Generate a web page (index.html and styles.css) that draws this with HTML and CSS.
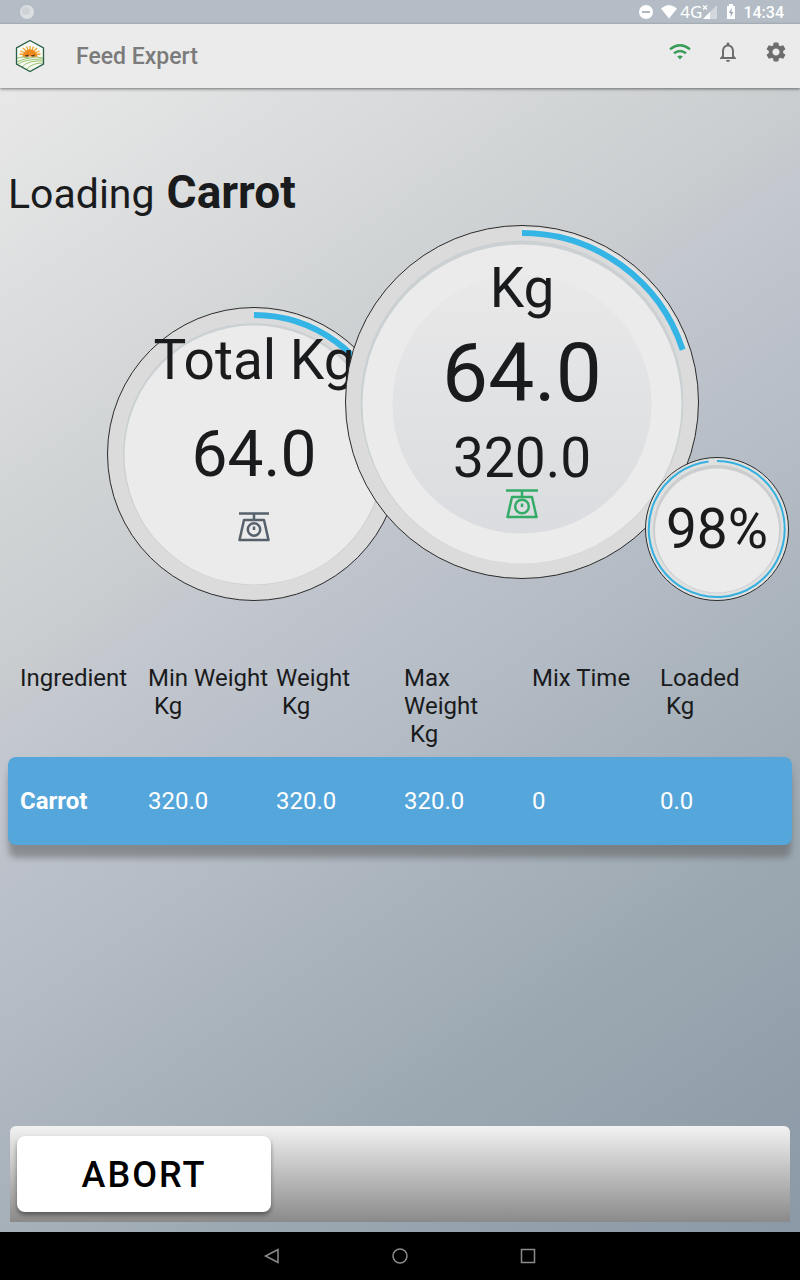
FILE: index.html
```html
<!DOCTYPE html>
<html lang="en">
<head>
<meta charset="utf-8">
<meta name="viewport" content="width=device-width, initial-scale=1">
<title>Feed Expert</title>
<link rel="stylesheet" href="styles.css">
</head>
<body>
<div class="status-bar">
  <svg class="status-dot" width="16" height="16" viewBox="0 0 16 16"><circle cx="8" cy="8" r="7" fill="#dcdfe1"/><circle cx="7" cy="7" r="4" fill="#ced3d6"/></svg>
  <div class="status-icons">
    <svg width="16" height="16" viewBox="0 0 16 16"><circle cx="8" cy="8" r="7" fill="#fff"/><rect x="4" y="7" width="8" height="2" fill="#b0b8bf"/></svg>
    <svg class="status-wifi" width="18" height="16" viewBox="0 0 18 16"><path d="M1 4.500Q9-2.500 17 4.500L9 14.500Z" fill="#fff"/></svg>
    <span class="network">4G</span>
    <svg class="status-signal" width="16" height="16" viewBox="0 0 16 16"><path d="M15 1v14H1Z" fill="#d3d8dc"/><path d="M8 8v7H1Z" fill="#fff"/><path d="M1 1.500l4 4M5 1.500l-4 4" stroke="#fff" stroke-width="1.200"/></svg>
    <svg class="status-battery" width="10" height="16" viewBox="0 0 10 16"><path d="M3 0h4v2h2v13H1V2h2Z" fill="#fff"/><path d="M5.500 4L3 9h1.700v4L7.200 8H5.500Z" fill="#9aa5ae"/></svg>
    <span class="clock">14:34</span>
  </div>
</div>

<header class="app-bar">
  <svg class="logo" width="30" height="34" viewBox="0 0 30 34">
    <path d="M15 1.500L28.500 9v16L15 32.500L1.500 25V9Z" fill="#f8faf5"/>
    <g stroke="#f0a028" stroke-width="1.300"><path d="M15 16V7M15 16L11.500 7.500M15 16L18.500 7.500M15 16L8 9M15 16L22 9M15 16L5.500 12M15 16L24.500 12M15 16L4.500 15M15 16L25.500 15"/></g>
    <path d="M7.500 18a7.500 7.500 0 0 1 15 0Z" fill="#ee8a1d"/>
    <path d="M10 16.500l3-1 1 2-3 .500ZM16 16.500l4-1-1 2-2 .500Z" fill="#59351a"/>
    <path d="M2 19Q15 16 28 19V25L15 32L2 25Z" fill="#f4f8ee"/>
    <g fill="none" stroke="#9bc272" stroke-width="1"><path d="M2 19Q8 17 14 19Q8 20 2 23M14 19Q22 17 28 19M3 25Q10 20 28 20M7 28Q13 21 28 22M12 30Q17 24 28 24"/></g>
    <path d="M15 1.500L28.500 9v16L15 32.500L1.500 25V9Z" fill="none" stroke="#285f46" stroke-width="1.300"/>
  </svg>
  <h1 class="app-title">Feed Expert</h1>
  <nav class="app-actions">
    <button class="icon-button" type="button" aria-label="Connection"><svg width="24" height="24" viewBox="0 0 24 24" fill="none" stroke="#3b9b58" stroke-width="2.500"><path d="M2 9.300Q12 1.300 22 9.300M6 13.300Q12 8.700 18 13.300"/><path d="M9.200 16.500Q12 14.400 14.800 16.500L12 19.500Z" fill="#3b9b58" stroke="none"/></svg></button>
    <button class="icon-button" type="button" aria-label="Notifications"><svg width="24" height="24" viewBox="0 0 24 24" fill="#6d6d6d"><path d="M12 22c1.100 0 2-.900 2-2h-4c0 1.100.900 2 2 2zm6-6v-5c0-3.070-1.630-5.640-4.500-6.320V4c0-.830-.670-1.500-1.500-1.500s-1.500.670-1.500 1.500v.680C7.640 5.360 6 7.920 6 11v5l-2 2v1h16v-1l-2-2zm-2 1H8v-6c0-2.480 1.510-4.500 4-4.500s4 2.020 4 4.500v6z"/></svg></button>
    <button class="icon-button" type="button" aria-label="Settings"><svg width="24" height="24" viewBox="0 0 24 24" fill="#6d6d6d"><path d="M19.140 12.940c.040-.300.060-.610.060-.940 0-.320-.020-.640-.070-.940l2.030-1.580c.180-.140.230-.410.120-.610l-1.920-3.320c-.120-.220-.370-.290-.590-.220l-2.390.960c-.500-.380-1.030-.700-1.620-.940l-.360-2.540c-.040-.240-.240-.410-.480-.410h-3.840c-.240 0-.430.170-.470.410l-.360 2.540c-.590.240-1.130.570-1.620.940l-2.390-.960c-.220-.080-.470 0-.590.220L2.740 8.870c-.120.210-.080.470.120.610l2.030 1.580c-.050.300-.090.630-.090.940s.020.640.070.940l-2.030 1.580c-.180.140-.230.410-.120.610l1.920 3.320c.120.220.370.290.590.220l2.390-.960c.500.380 1.030.700 1.620.940l.360 2.540c.050.240.240.410.480.410h3.840c.240 0 .440-.170.470-.410l.360-2.540c.590-.240 1.130-.560 1.620-.940l2.390.960c.220.080.470 0 .590-.220l1.920-3.320c.120-.220.070-.470-.120-.610l-2.010-1.580zM12 15.600c-1.980 0-3.600-1.620-3.600-3.600s1.620-3.600 3.600-3.600 3.600 1.620 3.600 3.600-1.620 3.600-3.600 3.600z"/></svg></button>
  </nav>
</header>

<main class="content">
  <h2 class="heading">Loading <strong>Carrot</strong></h2>

  <section class="gauges">
    <div class="gauge gauge-total">
      <svg class="dial" viewBox="0 0 294 294">
        <circle cx="147" cy="147" r="146.500" fill="#dbdbdb" stroke="#2b2b2b"/>
        <path d="M147 5A142 142 0 0 1 282 103" fill="none" stroke="#e6e4e2" stroke-width="5"/>
        <circle cx="147" cy="147" r="131" fill="#cbd0d3"/>
        <circle cx="147" cy="148" r="129.500" fill="#ebebeb"/>
        <path d="M147 8A139 139 0 0 1 279.200 104" fill="none" stroke="#35b4e6" stroke-width="6"/>
      </svg>
      <div class="readout">
        <span class="unit">Total Kg</span>
        <span class="total-value">64.0</span>
        <svg class="scale-icon scale-grey" width="32" height="32" viewBox="0 0 32 32"><path d="M1 2.500H31M16 2.500V9M6 9H26L30.500 29H1.500Z"/><circle cx="16" cy="18.500" r="6.200"/><path d="M16 15.500V19"/></svg>
      </div>
    </div>
    <div class="gauge gauge-main">
      <svg class="dial" viewBox="0 0 354 354">
        <defs><linearGradient id="disc" x1="0" y1="0" x2="0" y2="1"><stop offset="0" stop-color="#e9e9e9"/><stop offset="0.500" stop-color="#e1e2e4"/><stop offset="1" stop-color="#dadcdf"/></linearGradient></defs>
        <circle cx="177" cy="177" r="176.500" fill="#dbdbdb" stroke="#2b2b2b"/>
        <path d="M177 5A172 172 0 0 1 340.600 124" fill="none" stroke="#e6e4e2" stroke-width="5"/>
        <circle cx="177" cy="177" r="161.500" fill="#cbd0d3"/>
        <circle cx="177" cy="179" r="159.500" fill="#ebebeb"/>
        <circle cx="177" cy="179" r="129.500" fill="url(#disc)"/>
        <path d="M177 8A169 169 0 0 1 337.700 124.800" fill="none" stroke="#35b4e6" stroke-width="6"/>
      </svg>
      <div class="readout">
        <span class="unit">Kg</span>
        <span class="main-value">64.0</span>
        <span class="target-value">320.0</span>
        <svg class="scale-icon scale-green" width="32" height="32" viewBox="0 0 32 32"><path d="M0 2.500H32M16 2.500V9M6 9H26L30.500 29H1.500Z"/><circle cx="16" cy="18.500" r="6.800"/><path d="M16 15.500V19"/></svg>
      </div>
    </div>
    <div class="gauge gauge-percent">
      <svg class="dial" viewBox="0 0 144 144">
        <circle cx="72" cy="72" r="71.500" fill="#dfe0e0" stroke="#2b2b2b"/>
        <circle cx="72" cy="72" r="64" fill="#cbcdcf"/>
        <circle cx="72" cy="73.500" r="62" fill="#ebebeb"/>
        <path d="M72 4A68 68 0 1 1 63.500 4.500" fill="none" stroke="#35b0df" stroke-width="2"/>
      </svg>
      <div class="readout"><span class="percent-value">98%</span></div>
    </div>
  </section>

  <table class="ingredients">
    <thead>
      <tr>
        <th scope="col">Ingredient</th>
        <th scope="col">Min Weight<br>&nbsp;Kg</th>
        <th scope="col">Weight<br>&nbsp;Kg</th>
        <th scope="col">Max Weight<br>&nbsp;Kg</th>
        <th scope="col">Mix Time</th>
        <th scope="col">Loaded<br>&nbsp;Kg</th>
      </tr>
    </thead>
    <tbody>
      <tr>
        <td><strong>Carrot</strong></td>
        <td>320.0</td>
        <td>320.0</td>
        <td>320.0</td>
        <td>0</td>
        <td>0.0</td>
      </tr>
    </tbody>
  </table>

  <div class="action-bar">
    <button class="abort" type="button">ABORT</button>
  </div>
</main>

<nav class="system-nav">
  <button class="system-button" type="button" aria-label="Back"><svg width="20" height="20" viewBox="0 0 20 20"><path d="M16 3.500V16.500L3.500 10Z"/></svg></button>
  <button class="system-button" type="button" aria-label="Home"><svg width="20" height="20" viewBox="0 0 20 20"><circle cx="10" cy="10" r="7"/></svg></button>
  <button class="system-button" type="button" aria-label="Recent apps"><svg width="20" height="20" viewBox="0 0 20 20"><rect x="3.500" y="3.500" width="13" height="13"/></svg></button>
</nav>
</body>
</html>
```
FILE: styles.css
```css
* {
  box-sizing: border-box;
}

body {
  margin: 0;
  min-height: 100vh;
  display: flex;
  flex-direction: column;
  font-family: Roboto, "Liberation Sans", sans-serif;
  color: #1a1b1d;
}

svg {
  display: block;
}

button {
  font: inherit;
  border: 0;
  padding: 0;
  background: none;
  cursor: pointer;
}

/* System status bar */
.status-bar {
  display: flex;
  align-items: center;
  justify-content: space-between;
  height: 24px;
  padding: 0 16px 0 19px;
  background: #b4bdc5;
  color: #fff;
}

.status-icons {
  display: flex;
  align-items: center;
}

.status-wifi {
  margin-left: 6px;
}

.network {
  margin-left: 2px;
  font: 17px/24px "Noto Sans", sans-serif;
}

.status-battery {
  margin: 0 7px 0 8px;
}

.clock {
  font-size: 16px;
  font-weight: 500;
}

/* Application bar */
.app-bar {
  position: relative;
  display: flex;
  align-items: center;
  height: 64px;
  padding: 0 12px 0 15px;
  background: #ebebeb;
  box-shadow: 0 1px 3px rgba(0, 0, 0, 0.5);
}

.app-title {
  flex: 1;
  margin: 0 0 0 31px;
  padding-top: 2px;
  font-size: 23px;
  font-weight: 500;
  line-height: 32px;
  color: #7b7b7b;
}

.app-actions {
  display: flex;
  gap: 24px;
  padding-bottom: 8px;
}

/* Page */
.content {
  flex: 1;
  display: flex;
  flex-direction: column;
  padding: 76px 8px 10px;
  background: linear-gradient(145deg, #e8e8e8 0%, #c9cdcf 34%, #c3c7cf 39%, #b2bac3 56%, #9ca8b1 77%, #8b98a6 100%);
}

.heading {
  display: flex;
  align-items: baseline;
  gap: 12px;
  margin: 0;
  font-size: 41px;
  font-weight: 400;
  line-height: 56px;
}

.heading strong {
  font-size: 46px;
}

/* Gauges */
.gauges {
  display: flex;
  justify-content: flex-end;
  align-items: flex-start;
  padding: 3px 3px 0 0;
}

.gauge {
  display: grid;
  flex: none;
}

.dial,
.readout {
  grid-area: 1 / 1;
}

.dial {
  width: 100%;
}

.readout {
  display: flex;
  flex-direction: column;
  align-items: center;
  white-space: nowrap;
}

.gauge-total {
  width: 294px;
  margin-top: 82px;
}

.gauge-main {
  width: 354px;
  margin-left: -56px;
}

.gauge-percent {
  width: 144px;
  margin: 232px 0 0 -54px;
}

.unit,
.target-value,
.percent-value {
  font-size: 55px;
  line-height: 64px;
}

.gauge-total .readout {
  padding-top: 21px;
}

.total-value {
  margin: 23px 0 16px;
  font-size: 64px;
  line-height: 80px;
}

.gauge-main .readout {
  padding-top: 31px;
}

.main-value {
  margin: 5px 0;
  font-size: 82px;
  line-height: 96px;
}

.gauge-main .scale-icon {
  margin-top: -2px;
}

.gauge-percent .readout {
  justify-content: center;
}

.scale-icon {
  fill: none;
  stroke-width: 2.5;
  stroke-linejoin: round;
}

.scale-grey {
  stroke: #56616c;
}

.scale-green {
  stroke: #34ac68;
}

/* Ingredients */
.ingredients {
  display: block;
  margin-top: 63px;
  font-size: 24px;
  line-height: 28px;
}

.ingredients thead,
.ingredients tbody {
  display: block;
}

.ingredients tr {
  display: grid;
  grid-template-columns: repeat(6, 1fr);
  padding: 0 4px 0 12px;
}

.ingredients th,
.ingredients td {
  padding: 0 6px 0 0;
  font-weight: 400;
  text-align: left;
}

.ingredients thead {
  padding-bottom: 9px;
}

.ingredients tbody tr {
  align-items: center;
  height: 88px;
  border-radius: 8px;
  background: #55a6da;
  box-shadow: 0 14px 6px -1px rgba(85, 85, 85, 0.45), 0 4px 6px rgba(85, 85, 85, 0.15);
  color: #fff;
}

/* Footer actions */
.action-bar {
  margin: auto 2px 0;
  padding: 10px 7px;
  border-radius: 6px 6px 0 0;
  background: linear-gradient(#f2f2f2, #8a8a8a);
}

.abort {
  display: block;
  width: 254px;
  height: 76px;
  padding-top: 2px;
  border-radius: 8px;
  background: #fff;
  box-shadow: 0 3px 4px rgba(0, 0, 0, 0.4);
  color: #000;
  font-size: 36px;
  font-weight: 500;
  letter-spacing: 2px;
}

/* System navigation */
.system-nav {
  display: flex;
  justify-content: center;
  align-items: center;
  gap: 108px;
  height: 48px;
  background: #000;
}

.system-button svg {
  fill: none;
  stroke: #8c8c8c;
  stroke-width: 1.5;
}
```
